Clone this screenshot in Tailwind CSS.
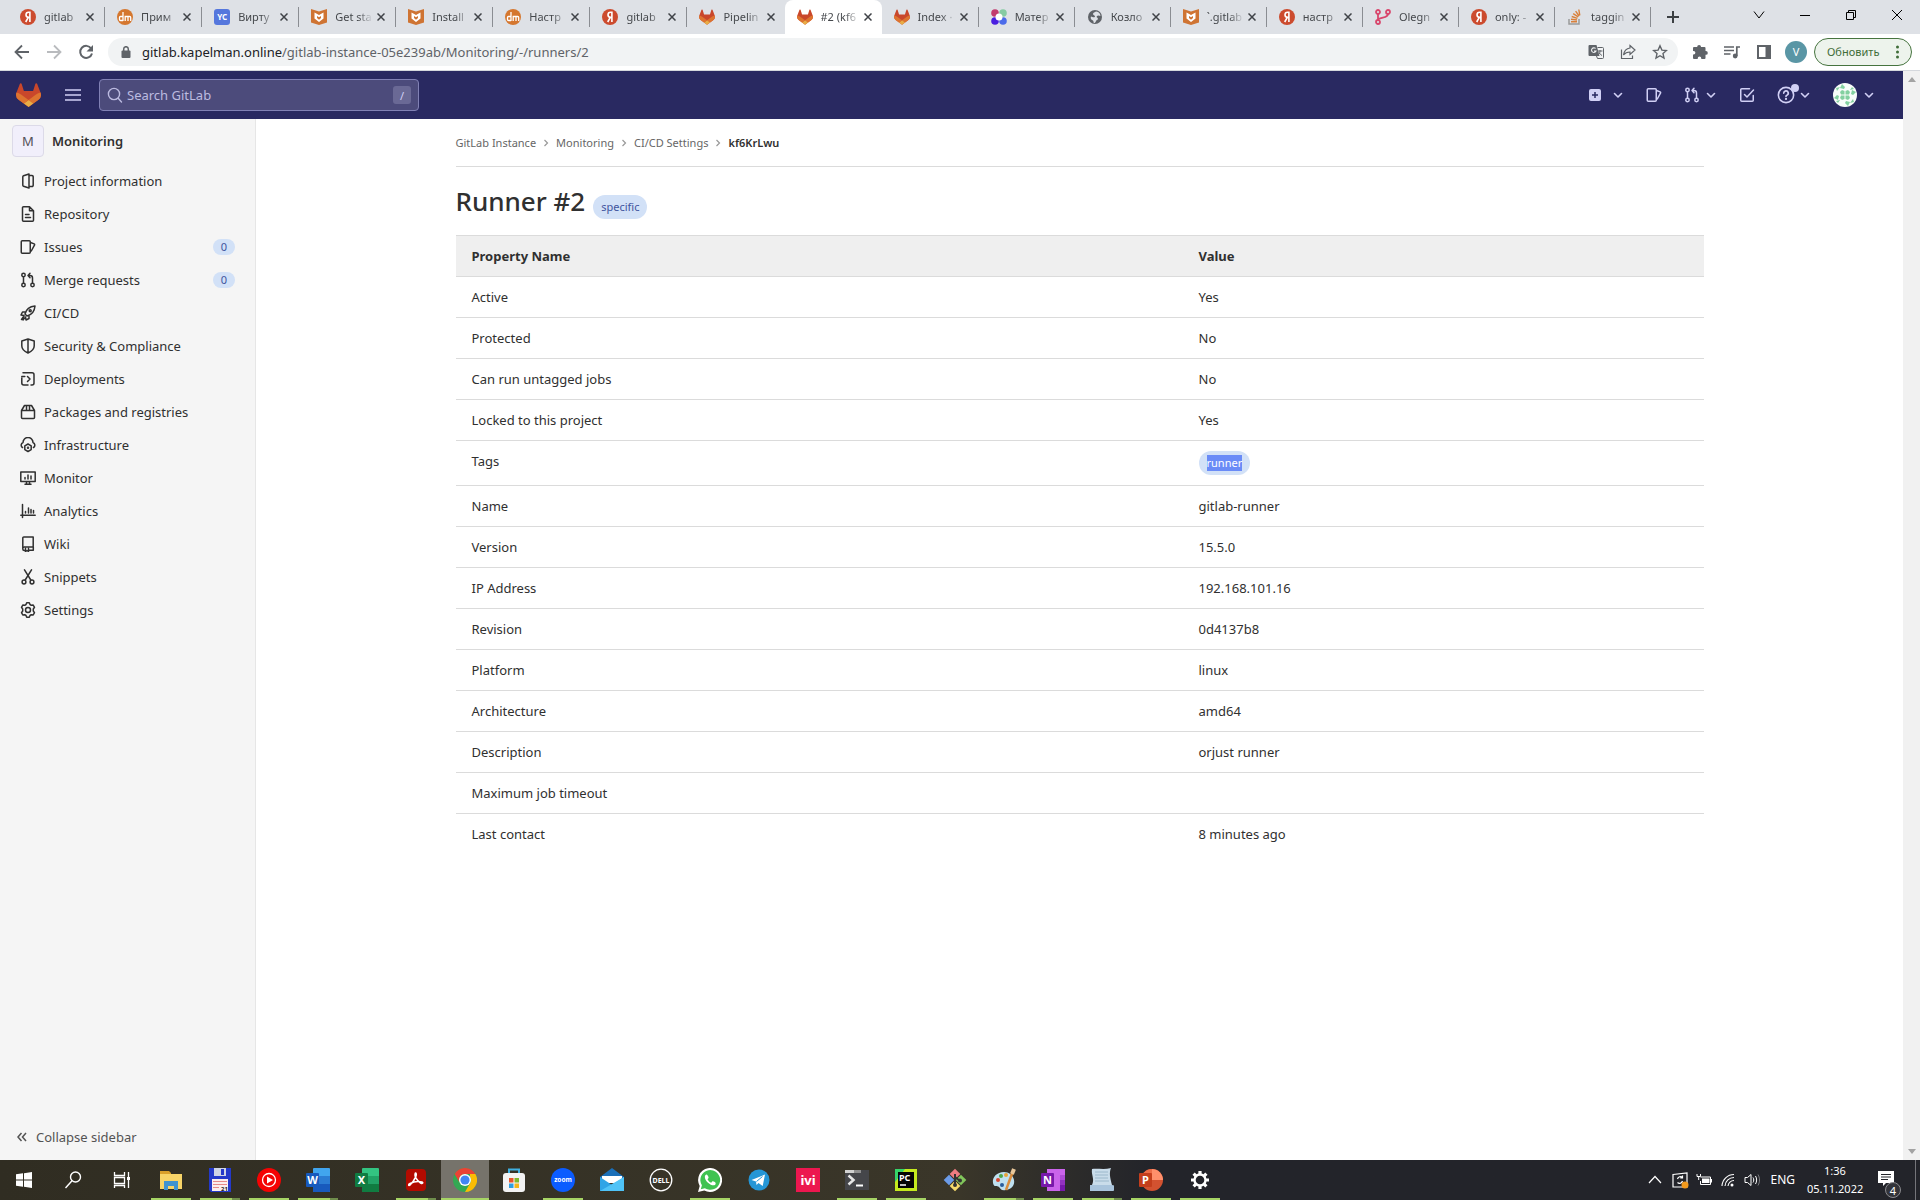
<!DOCTYPE html>
<html lang="ru">
<head>
<meta charset="utf-8">
<title>#2 (kf6KrLwu) · GitLab</title>
<script src="https://cdn.jsdelivr.net/npm/@tailwindcss/browser@4"></script>
</head>
<body class="flex min-h-screen flex-col bg-white font-['Noto_Sans','Open_Sans',sans-serif] text-[13px] leading-5 text-[#303030]">

<svg class="hidden" aria-hidden="true">
  <symbol id="tanuki" viewBox="0 0 25 24">
    <path fill="#c9472b" d="M24.5 9.5 21.1.7a.9.9 0 0 0-1.7.1l-2.3 7.1H7.9L5.6.8A.9.9 0 0 0 3.9.7L.5 9.5a6.3 6.3 0 0 0 2.1 7.2l10 7.3 9.9-7.3a6.300 6.300 0 0 0 2-7.200z"/>
    <path fill="#dd7430" d="m24.500 9.500a11.500 11.500 0 0 0-4.500 2l-7.400 5.600 4.700 3.500 5.200-3.900a6.300 6.300 0 0 0 2-7.200z"/>
    <path fill="#e8ad46" d="m7.800 20.600 4.800 3.400 4.700-3.400-4.700-3.500z"/>
    <path fill="#dd7430" d="M5 11.500a11.500 11.500 0 0 0-4.500-2 6.300 6.300 0 0 0 2.100 7.200l5.200 3.900 4.800-3.500z"/>
  </symbol>
  <symbol id="yandex" viewBox="0 0 16 16"><circle cx="8" cy="8" r="8" fill="#cc4b2e"/><path fill="none" stroke="#fff" stroke-width="1.600" d="M9.900 13V3.200H8.600a2.400 2.400 0 0 0 0 5.200h1.300M8.300 8.400 5.700 13"/></symbol>
  <symbol id="shield" viewBox="0 0 16 16"><path fill="#cf7433" d="M0 0l8 2.500L16 0v13.500L8 16l-8-2.500z"/><path fill="#fff" d="M3.500 3.500 8 6l4.500-2.500v6L8 13 3.500 9.500z"/><path fill="#cf7433" d="M6 7l2 1.200L10 7v2L8 10.700 6 9z"/></symbol>
  <symbol id="dm" viewBox="0 0 16 16"><circle cx="8" cy="8" r="8" fill="#d5772f"/><path fill="none" stroke="#fff" stroke-width="1.300" d="M6 3v9M6 7.500H3.500a1 1 0 0 0-1 1v2a1 1 0 0 0 1 1H6M8.200 12V7.500h4.500a1 1 0 0 1 1 1V12M11 7.500V12"/></symbol>
  <symbol id="x" viewBox="0 0 8 8"><path stroke="currentColor" stroke-width="1.500" d="m.5.5 7 7m0-7-7 7"/></symbol>
  <symbol id="chev" viewBox="0 0 12 12"><path fill="none" stroke="currentColor" stroke-width="1.600" stroke-linecap="round" stroke-linejoin="round" d="M2.500 4.500 6 8l3.500-3.500"/></symbol>
  <symbol id="issues" viewBox="0 0 16 16"><g fill="none" stroke="currentColor" stroke-width="1.500" stroke-linejoin="round"><rect x="1.250" y="1.750" width="9" height="12.500" rx="1"/><path d="M10.500 3.500l3.700 1.400a.8.800 0 0 1 .4 1L11 12.500"/></g></symbol>
  <symbol id="merge" viewBox="0 0 16 16"><g fill="none" stroke="currentColor" stroke-width="1.500" stroke-linecap="round" stroke-linejoin="round"><circle cx="3.500" cy="3" r="1.700"/><circle cx="3.500" cy="13" r="1.700"/><circle cx="12.500" cy="13" r="1.700"/><path d="M3.500 4.800v6.400M12.500 11.200V6a2.500 2.500 0 0 0-2.500-2.500H8.200M10 1.300 8 3.500l2 2.200"/></g></symbol>
</svg>

<!-- Browser tab strip -->
<header>
<div class="flex h-[34px] bg-[#dee1e6] pl-2 text-[11px] text-[#45484c]">
  <nav class="flex min-w-0 flex-1" aria-label="Tabs" id="tabs"></nav>
  <div class="flex w-[269px] items-center text-black">
    <button class="ml-[14px] grid size-4 place-items-center text-[#3c4043]" aria-label="New tab"><svg class="size-3" viewBox="0 0 12 12"><path stroke="currentColor" stroke-width="2" d="M6 0v12M0 6h12"/></svg></button>
    <div class="ml-auto flex items-center gap-[34px] pb-1 pr-[17px]">
      <button aria-label="Search tabs"><svg class="size-3" viewBox="0 0 12 12"><path fill="none" stroke="currentColor" d="m1 2.500 5 6.500 5-6.500"/></svg></button>
      <button aria-label="Minimize"><svg class="size-3" viewBox="0 0 12 12"><path stroke="currentColor" d="M1 6.500h10"/></svg></button>
      <button aria-label="Restore"><svg class="size-3" viewBox="0 0 12 12"><path fill="none" stroke="currentColor" d="M1.500 3.500h7v7h-7zM3.500 3.500v-2h7v7h-2"/></svg></button>
      <button aria-label="Close"><svg class="size-3" viewBox="0 0 12 12"><path stroke="currentColor" d="m1 1 10 10M11 1 1 11"/></svg></button>
    </div>
  </div>
</div>

<!-- Address bar -->
<div class="flex h-[37px] items-center border-b border-[#d5d8dd] bg-white pl-[14px] pr-2 text-[#5f6368]">
  <button aria-label="Back"><svg class="size-4" viewBox="0 0 16 16"><path fill="none" stroke="currentColor" stroke-width="1.800" d="M15 8H2M8 1.500 1.500 8 8 14.500"/></svg></button>
  <button class="ml-4 text-[#b9bbbe]" aria-label="Forward"><svg class="size-4" viewBox="0 0 16 16"><path fill="none" stroke="currentColor" stroke-width="1.800" d="M1 8h13M8 1.500 14.500 8 8 14.500"/></svg></button>
  <button class="ml-4" aria-label="Reload"><svg class="size-4" viewBox="0 0 16 16"><path fill="none" stroke="currentColor" stroke-width="2" d="M13.200 4.500A6 6 0 1 0 14 9.500"/><path fill="currentColor" d="M15 1v6.500H8.500z"/></svg></button>
  <div class="ml-[14px] flex h-7 min-w-0 flex-1 items-center rounded-full bg-[#f1f3f4] pl-3 pr-[10px]">
    <svg class="mr-[10px] size-3" viewBox="0 0 12 12"><rect x="1.500" y="4.500" width="9" height="7.500" rx="1" fill="currentColor"/><path fill="none" stroke="currentColor" stroke-width="1.500" d="M3.700 5V3a2.300 2.300 0 0 1 4.600 0v2"/></svg>
    <a href="#" class="flex-1 truncate"><span class="text-[#202124]">gitlab.kapelman.online</span>/gitlab-instance-05e239ab/Monitoring/-/runners/2</a>
    <div class="flex gap-4">
      <button aria-label="Translate"><svg class="size-4" viewBox="0 0 16 16"><path fill="currentColor" d="M1.500 1h7l3 11h-10A1 1 0 0 1 .5 11V2a1 1 0 0 1 1-1z"/><path fill="none" stroke="currentColor" d="M9.500 3.500h5a1 1 0 0 1 1 1v9a1 1 0 0 1-1 1h-5l-1-2.500M9.500 7h5M12 6v1c0 2-1 3.500-2 4M11 8.500c.5 1 1.500 2 3 3"/><path fill="none" stroke="#f1f3f4" stroke-width="1.100" d="M7.500 4.500a2.300 2.300 0 1 0 .500 2.500H6"/></svg></button>
      <button aria-label="Share"><svg class="size-4" viewBox="0 0 16 16"><path fill="none" stroke="currentColor" stroke-width="1.200" d="M1.500 5.500v9h11v-3M10 1.500l5 4.500-5 4.500V8c-3 0-5 1-6.500 3C4 7.500 6 4.500 10 4z"/></svg></button>
      <button aria-label="Bookmark"><svg class="size-4" viewBox="0 0 16 16"><path fill="none" stroke="currentColor" stroke-width="1.400" d="m8 1.800 1.900 4.300 4.600.4L11 9.600l1 4.500-4-2.400-4 2.400 1-4.500-3.500-3.100 4.600-.4z"/></svg></button>
    </div>
  </div>
  <div class="ml-[14px] flex gap-4">
    <button aria-label="Extensions"><svg class="size-4" viewBox="0 0 16 16"><path fill="currentColor" d="M5.200 3V2.800a1.900 1.900 0 0 1 3.800 0V3h3.500a1 1 0 0 1 1 1v3h.4a1.900 1.900 0 0 1 0 3.800h-.4V14a1 1 0 0 1-1 1H9.300v-.6a1.800 1.800 0 0 0-3.600 0v.6H2a1 1 0 0 1-1-1v-3.500h.6a1.800 1.800 0 0 0 0-3.600H1V4a1 1 0 0 1 1-1z"/></svg></button>
    <button aria-label="Media"><svg class="size-4" viewBox="0 0 16 16"><path stroke="currentColor" stroke-width="1.500" d="M0 3h10M0 6.500h10M0 10h6.500"/><path fill="none" stroke="currentColor" stroke-width="1.700" d="M16 3h-3.200v9"/><circle cx="11.200" cy="12" r="2.400" fill="currentColor"/></svg></button>
    <button aria-label="Side panel"><svg class="size-4" viewBox="0 0 16 16"><path fill="none" stroke="currentColor" stroke-width="2" d="M2 2h12v12H2z"/><path fill="currentColor" d="M9.500 2H14v12H9.500z"/></svg></button>
  </div>
  <button class="ml-[13px] size-[22px] rounded-full bg-[#5a96a5] text-[11px] text-white" aria-label="Profile">V</button>
  <button class="ml-[7px] flex h-7 w-[98px] items-center justify-between rounded-full border border-[#46743f] bg-[#edf3ec] pl-3 pr-3 text-[11px] text-[#3f6d38]">Обновить<svg class="h-4 w-[3px]" viewBox="0 0 3 16" fill="currentColor"><circle cx="1.500" cy="3" r="1.500"/><circle cx="1.500" cy="8" r="1.500"/><circle cx="1.500" cy="13" r="1.500"/></svg></button>
</div>
</header>

<div class="flex flex-1">
<div class="flex min-w-0 flex-1 flex-col">
  <!-- GitLab top navigation -->
  <div class="flex h-12 items-center bg-[#292961] pl-4 pr-7 text-[#d1d0f5]">
    <a href="#" aria-label="GitLab"><svg class="h-6 w-[25px]"><use href="#tanuki"/></svg></a>
    <button class="ml-6" aria-label="Menu"><svg class="size-4" viewBox="0 0 16 16"><path stroke="currentColor" stroke-width="1.500" d="M0 3h16M0 8h16M0 13h16"/></svg></button>
    <div class="ml-[18px] flex h-8 w-80 items-center rounded border border-[#8181b5] bg-[#4c4b7b] pl-[7px] pr-[7px]">
      <svg class="size-4 text-[#bcbbe0]" viewBox="0 0 16 16"><path fill="none" stroke="currentColor" stroke-width="1.400" stroke-linecap="round" d="M11.200 11.200 14.500 15"/><circle cx="7" cy="7" r="5.600" fill="none" stroke="currentColor" stroke-width="1.400"/></svg>
      <input type="text" aria-label="Search GitLab" placeholder="Search GitLab" class="ml-1 min-w-0 flex-1 bg-transparent placeholder:text-[#bcbbe0]">
      <kbd class="grid h-[18px] w-[18px] place-items-center rounded-[3px] bg-[#6a6995] font-[inherit] text-[11px]">/</kbd>
    </div>
    <div class="ml-auto flex items-center gap-[22px]">
      <button class="flex items-center gap-[9px]" aria-label="Create new"><svg class="size-4" viewBox="0 0 16 16"><rect x="2" y="2" width="12" height="12" rx="2" fill="currentColor"/><path stroke="#292961" stroke-width="1.500" d="M8 5v6M5 8h6"/></svg><svg class="size-3"><use href="#chev"/></svg></button>
      <a href="#" aria-label="Issues"><svg class="size-4"><use href="#issues"/></svg></a>
      <button class="flex items-center gap-[5px]" aria-label="Merge requests"><svg class="size-4"><use href="#merge"/></svg><svg class="size-3"><use href="#chev"/></svg></button>
      <a href="#" aria-label="To-Do List"><svg class="size-4" viewBox="0 0 16 16"><path fill="none" stroke="currentColor" stroke-width="1.500" stroke-linecap="round" stroke-linejoin="round" d="M10.500 1.750H2.750a1 1 0 0 0-1 1v10.500a1 1 0 0 0 1 1h10.500a1 1 0 0 0 1-1V8.500M5.500 7.500 8 10l6.500-7"/></svg></a>
      <button class="relative flex items-center gap-1" aria-label="Help"><svg class="size-[18px]" viewBox="0 0 16 16"><circle cx="8" cy="8" r="6.800" fill="none" stroke="currentColor" stroke-width="1.400"/><path fill="none" stroke="currentColor" stroke-width="1.500" stroke-linecap="round" d="M6 6.300a2 2 0 1 1 2.800 1.900c-.5.200-.8.500-.8 1"/><circle cx="8" cy="11.500" r="1" fill="currentColor"/></svg><svg class="size-3"><use href="#chev"/></svg><span class="absolute -top-[2px] left-[14px] size-2 rounded-full bg-[#d1d0f5]"></span></button>
      <button class="flex items-center gap-1.5" aria-label="Account"><svg class="size-6 rounded-full bg-[#f8fcf9]" viewBox="0 0 24 24"><g fill="#83d0a0"><path d="M9 7l2.500 1v3.500H8L7 9zM15 7l-2.500 1v3.500H16L17 9zM9 17l2.500-1v-3.500H8L7 15zM15 17l-2.500-1v-3.500H16L17 15z"/><path d="M3 5l4-1-3 4zM9 1l3 3-1 2-4-1zM19 4l2 2-4 1zM23 9l-3 3-2-1 1-4zM21 19l-4 1 3-4zM15 23l-3-3 1-2 4 1zM5 20l-2-2 4-1zM1 15l3-3 2 1-1 4z"/></g></svg><svg class="size-3"><use href="#chev"/></svg></button>
    </div>
  </div>

  <div class="flex flex-1">
    <!-- Project sidebar -->
    <aside class="flex w-64 flex-none flex-col border-r border-[#e6e6e6] bg-[#f5f5f5]">
      <a href="#" class="mb-[7px] ml-3 mt-1.5 flex items-center gap-2 font-semibold"><span class="grid size-8 place-items-center rounded border border-[#dcdae8] bg-[#f1effb] font-normal text-[#535158]">M</span>Monitoring</a>
      <ul id="side" class="flex flex-col"></ul>
      <button class="mt-auto flex items-center gap-2 pb-[13px] pl-4 text-[#535353]"><svg class="size-3" viewBox="0 0 12 12"><path fill="none" stroke="currentColor" stroke-width="1.500" d="M5.500 2 2 6l3.500 4M10 2 6.500 6 10 10"/></svg>Collapse sidebar</button>
    </aside>

    <main class="min-w-0 flex-1">
      <div class="mx-auto max-w-[1280px] px-4">
        <nav class="flex h-12 items-center gap-[6px] border-b border-[#dbdbdb] pt-px text-[11px] text-[#666]" aria-label="Breadcrumb">
          <a href="#">GitLab Instance</a><svg class="size-2 text-[#999]" viewBox="0 0 8 8"><path fill="none" stroke="currentColor" stroke-width="1.200" d="m2.500 1 3 3-3 3"/></svg>
          <a href="#">Monitoring</a><svg class="size-2 text-[#999]" viewBox="0 0 8 8"><path fill="none" stroke="currentColor" stroke-width="1.200" d="m2.500 1 3 3-3 3"/></svg>
          <a href="#">CI/CD Settings</a><svg class="size-2 text-[#999]" viewBox="0 0 8 8"><path fill="none" stroke="currentColor" stroke-width="1.200" d="m2.500 1 3 3-3 3"/></svg>
          <a href="#" class="font-semibold text-[#303030]">kf6KrLwu</a>
        </nav>
        <div class="flex h-[68px] items-center gap-2">
          <h1 class="text-[26px] font-medium leading-8">Runner #2</h1>
          <span class="mt-3 rounded-full bg-[#d2e1f7] px-2 text-[11px] leading-6 text-[#41549e]">specific</span>
        </div>
        <table class="w-full table-fixed border-collapse text-left">
          <thead>
            <tr class="border-y border-[#dbdbdb] bg-[#efefef]"><th class="w-[727px] px-4 py-[10px] font-bold">Property Name</th><th class="px-4 py-[10px] font-bold">Value</th></tr>
          </thead>
          <tbody id="rows"></tbody>
        </table>
      </div>
    </main>
  </div>
</div>
<!-- Scrollbar track -->
<div class="flex w-[17px] flex-none flex-col items-center justify-between bg-[#f1f1f1] py-[6px] text-[#a3a3a3]">
  <svg class="h-[5px] w-2" viewBox="0 0 8 5"><path fill="currentColor" d="m4 0 4 5H0z"/></svg>
  <svg class="h-[5px] w-2" viewBox="0 0 8 5"><path fill="currentColor" d="M0 0h8L4 5z"/></svg>
</div>
</div>

<!-- Windows taskbar -->
<footer class="flex h-10 bg-linear-to-r from-[#302d22] from-0% via-[#3a3629] via-50% to-[#23242a] to-60% text-white">
  <div id="apps" class="flex"></div>
  <div class="ml-auto flex items-center text-[12px]">
    <button aria-label="Hidden icons"><svg class="size-4" viewBox="0 0 16 16"><path fill="none" stroke="currentColor" stroke-width="1.200" d="m2 11 6-6.500L14 11"/></svg></button>
    <svg class="ml-2 size-[18px]" viewBox="0 0 18 18"><path fill="none" stroke="currentColor" stroke-width="1.200" d="M2 3.500 16 2v14H2zM6.500 8a3 3 0 0 1 5-1.500M11.500 4.500v2.300H9.300M11.500 10a3 3 0 0 1-5 1.500"/><circle cx="14" cy="14" r="3.500" fill="#f39a1e"/></svg>
    <svg class="ml-[7px] size-4" viewBox="0 0 16 16"><path fill="none" stroke="currentColor" d="M4.500 5h10v7.500h-10V9M15.500 7v3.500M1 2v2.500h3.500V2M2.700 4.500V8"/><path fill="currentColor" d="M6 6.500h7.500V11H6z"/></svg>
    <svg class="ml-2 size-4" viewBox="0 0 16 16"><g fill="none" stroke="currentColor" stroke-width="1.100"><path d="M2 14A12 12 0 0 1 14 2.500M5 14a9 9 0 0 1 9-8.500M8 14a6 6 0 0 1 6-5.500"/></g><circle cx="12" cy="13" r="1.500" fill="currentColor"/></svg>
    <svg class="ml-2 size-4" viewBox="0 0 16 16"><g fill="none" stroke="currentColor"><path d="M1 5.500h2.500L7 2.500v11l-3.500-3H1zM9 5.500c1 1.500 1 3.500 0 5M11.500 4c1.500 2.500 1.500 5.500 0 8"/><path d="M14 2.500c2 3.500 2 7.500 0 11" opacity=".4"/></g></svg>
    <span class="ml-[10px]">ENG</span>
    <time class="ml-3 w-14 text-center text-[11px] leading-[18px]">1:36<br>05.11.2022</time>
    <button class="relative ml-[14px] h-9 w-6" aria-label="Notifications, 4 new"><svg class="mb-1 size-5" viewBox="0 0 20 20"><path fill="currentColor" d="M1 3h16v12h-8l-3 3v-3H1z"/><path stroke="#23242a" stroke-width="1.200" d="M4 6.500h10M4 9h10M4 11.500h7"/></svg><span class="absolute bottom-0 right-0 grid size-4 place-items-center rounded-full border border-[#8b8b8f] bg-[#33343a] text-[11px] leading-none">4</span></button>
    <span class="ml-[14px] mr-1 h-10 w-px bg-[#75757a]"></span>
  </div>
</footer>

<script>
const tabs = [
  ["gitlab", "yandex"], ["Прим", "dm"], ["Вирту", "yc"], ["Get sta", "shield"], ["Install", "shield"],
  ["Настр", "dm"], ["gitlab", "yandex"], ["Pipelin", "tanuki"], ["#2 (kf6", "tanuki"], ["Index ·", "tanuki"],
  ["Матер", "dots"], ["Козло", "globe"], ["`.gitlab", "shield"], ["настр", "yandex"], ["Olegn", "branch"],
  ["only: -", "yandex"], ["taggin", "stack"]
];
const special = {
  yc: '<span class="grid size-4 flex-none place-items-center rounded-[3px] bg-[#5577dd] text-[8px] font-bold leading-none text-white">YC</span>',
  dots: '<svg class="size-4 flex-none" viewBox="0 0 16 16"><circle cx="4" cy="4" r="3.800" fill="#c23b6e"/><circle cx="12" cy="4" r="3.800" fill="#86cba3"/><circle cx="4" cy="12" r="3.800" fill="#4a1fe0"/><circle cx="12" cy="12" r="3.800" fill="#4b6bea"/><circle cx="8" cy="8" r="3.500" fill="#fff"/></svg>',
  globe: '<svg class="size-4 flex-none" viewBox="0 0 16 16"><circle cx="8" cy="8" r="7" fill="#5f6368"/><path fill="#dee1e6" d="M9 2.500c-1 1-3 1-3 2.500s2 1 2 2.500-3 .500-4 0C3 10 5 11 6 11.500c1 1 0 2 1 2.500 2 0 1.500-2.500 3-3 1.500-.600 1-2 0-2.500s0-2 1.500-2S14 8 13 5c-1-1.500-2-2.500-4-2.500z"/></svg>',
  branch: '<svg class="size-4 flex-none" viewBox="0 0 16 16"><g fill="none" stroke="#d8466c" stroke-width="1.800"><circle cx="3" cy="3" r="2"/><circle cx="13" cy="3" r="2"/><circle cx="3" cy="13" r="2"/><path d="M3 5v6M13 5c0 4-6 3-9.500 5"/></g></svg>',
  stack: '<svg class="size-4 flex-none" viewBox="0 0 16 16"><path fill="none" stroke="#9a9a9a" stroke-width="1.500" d="M2 10v5h10v-5"/><path stroke="#d9803a" stroke-width="1.400" d="M4 12.700h6M4 10.300l6 .700M4.700 7.500l5.700 1.800M6.200 4.700l5 3.200M8.600 2.200l3.500 4.800M11.800.5l1 5.800"/></svg>'
};
document.getElementById("tabs").innerHTML = tabs.map(([t, i], n) => {
  const active = n === 8;
  const icon = special[i] || `<svg class="size-4 flex-none"><use href="#${i}"/></svg>`;
  const sep = active || n === 7 ? "" : "border-r border-[#8a8d92]";
  return `<div class="flex min-w-0 grow ${n < 10 ? "basis-[97px]" : "basis-[96px]"} items-center ${active ? "rounded-t-lg bg-white" : ""}"><div class="flex h-5 w-full items-center ${sep} pl-3 pr-[10px]">${icon}<a href="#" class="ml-2 min-w-0 flex-1 overflow-hidden whitespace-nowrap mask-r-from-60%">${t}</a><button class="ml-1 text-[#3f4247]" aria-label="Close tab"><svg class="size-2"><use href="#x"/></svg></button></div></div>`;
}).join("");

const s = p => `<svg class="size-4 flex-none" viewBox="0 0 16 16"><g fill="none" stroke="currentColor" stroke-width="1.500" stroke-linecap="round" stroke-linejoin="round">${p}</g></svg>`;
const side = [
  ["Project information", s('<path d="M9 1 3.500 2.800a1 1 0 0 0-.7 1v8.400a1 1 0 0 0 .7 1L9 15zM9.500 2.500H12a1.200 1.200 0 0 1 1.200 1.200v8.600A1.200 1.200 0 0 1 12 13.500H9.500"/>')],
  ["Repository", s('<path d="M9.500.8h-6a1 1 0 0 0-1 1v12.400a1 1 0 0 0 1 1h9a1 1 0 0 0 1-1V4.800zM9.500.8v4h4M5.500 8.500H9M5.500 11.500h5"/>')],
  ["Issues", '<svg class="size-4 flex-none"><use href="#issues"/></svg>', 0],
  ["Merge requests", '<svg class="size-4 flex-none"><use href="#merge"/></svg>', 0],
  ["CI/CD", s('<path d="M5 9c1-4 4-7.500 10-8-.5 6-4 9-8 10zM5 7H2.500L1 10l3 .5M9 11v2.500L6 15l-.500-3M4 11l-2.500 3.500M4.500 13 3 15"/><circle cx="10.200" cy="5.800" r="1"/>')],
  ["Security & Compliance", s('<path d="M8 1 1.800 3v5c0 3.500 3 5.500 6.200 7 3.200-1.500 6.200-3.500 6.200-7V3zM8 1v14"/>')],
  ["Deployments", s('<path d="M3 1.800h9a2 2 0 0 1 2 2V12a2 2 0 0 1-2 2h-1M1.800 7v5a2 2 0 0 0 2 2H8M1.800 5.500h3M7.500 5.500 10 8l-2.500 2.500"/>')],
  ["Packages and registries", s('<path d="M1.500 6.500v7a1 1 0 0 0 1 1h11a1 1 0 0 0 1-1v-7zM1.500 6.500l3-5h7l3 5M6.500 1.500v5M9.500 1.500v5"/>')],
  ["Infrastructure", s('<path d="M2.500 10.500A2.800 2.800 0 0 1 3 5.500a5 5 0 0 1 10 0 2.800 2.800 0 0 1 .5 5M8 7l3.200 1.800v3.800L8 14.500l-3.200-1.900V8.800z"/><circle cx="8" cy="10.700" r=".5"/>')],
  ["Monitor", s('<path d="M.8 2h14.400v9.500H.800zM5 14.300h6M6.500 11.500v2.800M9.500 11.500v2.800M5 7.500V9M8 5v4M11 6v3"/>')],
  ["Analytics", s('<path d="M2.500 1.500v13M.8 12.300h14.400M5.500 8.500V10M8.500 5v5M11 6.500V10M13.500 7.500V10"/>')],
  ["Wiki", s('<path d="M13.200 11.500V1H3.800a1 1 0 0 0-1 1v11a1.500 1.500 0 0 0 1.500 1.500h1M2.800 12a1.500 1.500 0 0 1 1.500-1h9v3.200H9M5.500 12.500v3L7 14.500l1.500 1v-3"/>')],
  ["Snippets", s('<path d="M4.500.8 10.800 11M11.500.8 5.200 11"/><circle cx="4" cy="13" r="1.900"/><circle cx="12" cy="13" r="1.900"/>')],
  ["Settings", s('<path d="M6.700.8h2.600l.7 1.700 1.300.8 1.900-.3 1.300 2.300L13.300 7v2l1.200 1.700-1.300 2.300-1.900-.3-1.300.8-.7 1.700H6.700L6 13.500l-1.300-.8-1.900.3-1.300-2.300L2.700 9V7L1.500 5.300 2.800 3l1.900.3L6 2.500z"/><circle cx="8" cy="8" r="2.500"/>')]
];
document.getElementById("side").innerHTML = side.map(([t, i, b]) =>
  `<li><a href="#" class="flex h-[33px] items-center gap-2 pl-5 pr-5">${i}<span>${t.replace("&", "&amp;")}</span>${b === undefined ? "" : `<span class="ml-auto w-[22px] rounded-full bg-[#d2e1f7] text-center text-[11px] leading-4 text-[#41549e]">${b}</span>`}</a></li>`).join("");

const rows = [["Active", "Yes"], ["Protected", "No"], ["Can run untagged jobs", "No"], ["Locked to this project", "Yes"],
  ["Tags", null], ["Name", "gitlab-runner"], ["Version", "15.5.0"], ["IP Address", "192.168.101.16"], ["Revision", "0d4137b8"],
  ["Platform", "linux"], ["Architecture", "amd64"], ["Description", "orjust runner"], ["Maximum job timeout", ""], ["Last contact", "8 minutes ago"]];
document.getElementById("rows").innerHTML = rows.map(([k, v]) =>
  `<tr class="border-b border-[#dbdbdb] last:border-b-0"><td class="px-4 py-[10px] align-top">${k}</td><td class="px-4 py-[10px] align-top">${v === null
    ? '<span class="inline-flex h-6 items-center rounded-full bg-[#d2e1f7] px-2 text-[11px] leading-4 text-white"><mark class="bg-[#6a8bf7] text-white">runner</mark></span>' : v}</td></tr>`).join("");

// Each entry: name, 24x24 artwork, window state ("" none, "1" one window, "2" several, "a" active)
const office = (l, c, d, m) => `<rect x="7" y="0" width="17" height="24" rx="1" fill="${m}"/><path fill="${c}" d="M7 8h17v8H7z"/><path fill="${d}" d="M7 16h17v7a1 1 0 0 1-1 1H7z"/><rect y="5" width="13" height="14" rx="1" fill="${d}"/><text x="6.500" y="16" text-anchor="middle" font-size="11" font-weight="700" fill="#fff">${l}</text>`;
const apps = [
  ["Start", '<path fill="#fff" d="M4 6.300 11 5.300V11.500H4zM12 5.200 20 4v7.500h-8zM4 12.500h7v6.200l-7-1zM12 12.500h8V20l-8-1.200z"/>', ""],
  ["Search", '<g fill="none" stroke="#fff" stroke-width="1.400"><circle cx="14.500" cy="9" r="5"/><path d="M11 12.800 4.500 20"/></g>', ""],
  ["Task view", '<path fill="none" stroke="#fff" stroke-width="1.300" d="M4.500 4v3.500h10V4M4.500 9.500h10v6h-10zM4.500 20v-2.500h10V20M18.500 4v16"/><path fill="#fff" d="M17 9h3v3h-3z"/>', ""],
  ["Explorer", '<path fill="#d9a02b" d="M1 3h9l2 2v4H1z"/><path fill="#f7d468" d="M1 6h22v15H1z"/><path fill="#3f93d0" d="M5 13h14v9h-4v-4H9v4H5z"/>', "1"],
  ["Total Commander", '<path fill="#2439c9" d="M1 0h22v24H3l-2-2z"/><path fill="#cfd4e6" d="M6 0h12v8H6z"/><path fill="#2439c9" d="M13 1h3v6h-3z"/><path fill="#fbeeee" d="M4 11h16v12H4z"/><path stroke="#e58a8a" d="M5 13.500h14M5 16.500h14M5 19.500h6"/><text x="13" y="23" font-size="6" font-weight="700" fill="#222">21</text>', "2"],
  ["YouTube Music", '<circle cx="12" cy="12" r="12" fill="#f40303"/><circle cx="12" cy="12" r="6.500" fill="none" stroke="#fff" stroke-width="1.300"/><path fill="#fff" d="m10 8.500 6 3.500-6 3.500z"/>', "1"],
  ["Word", office("W", "#2b7cd3", "#185abd", "#41a5ee"), "2"],
  ["Excel", office("X", "#21a366", "#107c41", "#33c481"), ""],
  ["Acrobat", '<rect x="2" y="1" width="20" height="22" rx="4" fill="#b30b00"/><path fill="none" stroke="#fff" stroke-width="1.600" d="M11.500 5c2 0 0 7-5.500 12-1.500 1-2-.5 0-1.500 4-2 8-2.500 12-1.500 1.500.6.5 1.800-1 1.200C12.500 13 10 7.500 11.500 5z"/>', "2"],
  ["Chrome", '<circle cx="12" cy="12" r="12" fill="#34a853"/><path fill="#ea4335" d="M1.600 6A12 12 0 0 1 22.400 6H12a6 6 0 0 0-5.200 9z"/><path fill="#fbbc05" d="M22.400 6A12 12 0 0 1 12 24l5.200-9A6 6 0 0 0 17 8.700V6z"/><circle cx="12" cy="12" r="6" fill="#fff"/><circle cx="12" cy="12" r="4.600" fill="#4285f4"/>', "a"],
  ["Store", '<path fill="none" stroke="#3fb0e0" stroke-width="2" d="M7 6V1.500h10V6"/><rect x="1" y="5" width="22" height="19" rx="3" fill="#f3f3f3"/><path fill="#e8542a" d="M7 10h4.500v4.500H7z"/><path fill="#7eb82c" d="M12.500 10H17v4.500h-4.500z"/><path fill="#2e9fe0" d="M7 15.500h4.500V20H7z"/><path fill="#f5b619" d="M12.500 15.500H17V20h-4.500z"/>', ""],
  ["Zoom", '<circle cx="12" cy="12" r="12" fill="#0b5cff"/><text x="12" y="14" text-anchor="middle" font-size="6.500" font-weight="700" fill="#fff">zoom</text>', "1"],
  ["Mail", '<path fill="#1a6fb8" d="M0 9 12 0l12 9v5H0z"/><path fill="#fff" d="M2 8h20v7H2z"/><path fill="#2fa4e6" d="M0 9l12 8 12-8v14H0z"/><path fill="#4fc3f7" d="M0 23 24 9v14z"/>', ""],
  ["Dell", '<circle cx="12" cy="12" r="10.800" fill="none" stroke="#fff" stroke-width="1.300"/><text x="12" y="14.500" text-anchor="middle" font-size="7" font-weight="700" fill="#fff">DELL</text>', ""],
  ["WhatsApp", '<path fill="#fff" d="m0 24 1.700-6A12 12 0 1 1 6.300 22.500z"/><path fill="#3fc351" d="m2.800 21.300 1.100-4a9.900 9.900 0 1 1 3 3z"/><path fill="#fff" d="M8.500 6.500c-3 1-1.500 5.500 1.500 8.300 3 2.700 7 3.700 7.700.9.400-1-2.700-3-3.500-2.100l-1 1.100c-1.500-.5-3-2-3.700-3.500l1-1.200c.400-.8-1-3.500-2-3.500z"/>', "1"],
  ["Telegram", '<circle cx="12" cy="12" r="10.500" fill="#2496d6"/><path fill="#fff" d="M4.500 12 18 6.500 15.700 18l-4.200-3-2 2-.5-3.500z"/><path stroke="#2496d6" d="m9.500 13.500 6-5"/>', ""],
  ["ivi", '<rect width="24" height="24" fill="#ec174f"/><text x="12" y="16.500" text-anchor="middle" font-size="13" font-weight="700" fill="#fff">ivi</text>', ""],
  ["Terminal", '<rect y="2" width="24" height="20" fill="#45464a"/><path fill="#d0d0d0" d="M0 2h9v3H0z"/><path fill="#8f8f8f" d="M9 2h7v3H9z"/><path fill="none" stroke="#e6e6e6" stroke-width="2.500" d="m3.500 7.500 5 4.500-5 4.500"/><path stroke="#fff" stroke-width="2" d="M11 17.500h7"/>', "1"],
  ["PyCharm", '<rect x="1" y="1" width="22" height="22" fill="#c5ea1e"/><path fill="#35d46a" d="M1 1h10L1 14z"/><rect x="4" y="4" width="16" height="16" fill="#050505"/><text x="5" y="12.500" font-size="9" font-weight="700" fill="#fff">PC</text><path stroke="#fff" stroke-width="1.500" d="M6 17h6"/>', "1"],
  ["Git", '<g transform="rotate(45 12 12)"><path fill="#ee7c82" d="M4 4h7.500v7.500H4z"/><path fill="#82c65b" d="M12.500 4H20v7.500h-7.500z"/><path fill="#6b9be8" d="M4 12.500h7.500V20H4z"/><path fill="#f6da6b" d="M12.500 12.500H20V20h-7.500z"/></g><path stroke="#333" stroke-width="2" d="M12 6v12M12 9l5 4"/><circle cx="12" cy="17" r="2" fill="#333"/><circle cx="17" cy="12.500" r="2" fill="#333"/>', ""],
  ["Paint", '<path fill="#bfe0f0" d="M12 4C5 4 0 9 1 15c1 5 4 2 6 4s2 4 7 3c6-1 9-5 8-10s-5-8-10-8z"/><circle cx="6" cy="12" r="2" fill="#d8452f"/><circle cx="9" cy="8" r="2" fill="#4fa64a"/><circle cx="14" cy="7" r="2" fill="#e8a33a"/><circle cx="10" cy="17" r="2" fill="#2a5d9c"/><path stroke="#d98c3c" stroke-width="2.500" d="M21 3 14 22"/><path stroke="#e8c79a" stroke-width="4" d="m20 6 2-5"/>', "2"],
  ["OneNote", '<rect x="6" y="1" width="18" height="22" fill="#ca64ea"/><path fill="#ae4bd5" d="M19 7h5v5h-5z"/><path fill="#9332bf" d="M19 12h5v5h-5z"/><path fill="#7719aa" d="M19 17h5v6h-5z"/><rect y="5" width="13" height="14" rx="1" fill="#7719aa"/><text x="6.500" y="16" text-anchor="middle" font-size="11" font-weight="700" fill="#fff">N</text>', "1"],
  ["Notepad", '<path fill="#c9dcea" d="M2 1c5-1 12 1 19-1-2 5-1 9 1 17H2c3-6-1-10 0-16z"/><path stroke="#93aec4" stroke-width=".8" d="M5 4h13M5 7h13M5 10h13M5 13h14"/><path fill="#a9c4dc" d="M0 17h22a2.500 2.500 0 0 1 0 6H0z"/>', "2"],
  ["PowerPoint", '<circle cx="13" cy="12" r="11" fill="#d35230"/><path fill="#ff8f6b" d="M13 1a11 11 0 0 1 11 11H13z"/><path fill="#ed6c47" d="M13 1a11 11 0 0 0-11 11h11z"/><rect y="5" width="13" height="14" rx="1" fill="#c43e1c"/><text x="6.500" y="16" text-anchor="middle" font-size="11" font-weight="700" fill="#fff">P</text>', "1"],
  ["Settings", '<circle cx="12" cy="12" r="5.500" fill="none" stroke="#fff" stroke-width="2.400"/><g stroke="#fff" stroke-width="3.200"><path d="M12 3v3.500M12 17.500V21M3 12h3.500M17.500 12H21M5.600 5.600l2.500 2.500M15.900 15.900l2.500 2.500M18.400 5.600l-2.500 2.500M8.100 15.900l-2.500 2.500"/></g>', "1"]
];
const bars = {
  "": "",
  "1": '<span class="absolute bottom-0 left-1 h-[2px] w-10 bg-[#a6d465]"></span>',
  "2": '<span class="absolute bottom-0 left-1 flex h-[2px] w-10 border-r-8 border-[#6f8d4c] bg-[#a6d465]"></span>',
  "a": '<span class="absolute bottom-0 left-0 h-[2px] w-12 bg-[#a6d465]"></span>'
};
document.getElementById("apps").innerHTML = apps.map(([n, art, st]) =>
  `<button aria-label="${n}" class="relative mr-px grid h-10 w-12 place-items-center ${st === "a" ? "bg-[#76736b]" : ""}"><svg class="size-6" viewBox="0 0 24 24">${art}</svg>${bars[st]}</button>`).join("");
</script>
</body>
</html>
